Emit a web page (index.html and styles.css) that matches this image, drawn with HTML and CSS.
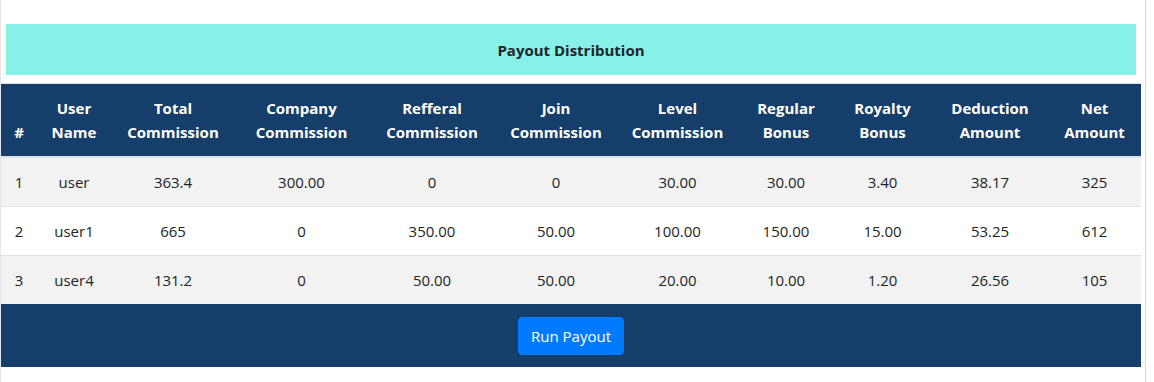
FILE: index.html
```html
<!DOCTYPE html>
<html>
<head>
<meta charset="utf-8">
<link rel="stylesheet" href="styles.css">
</head>
<body>
<div class="page">
  <div class="panel">
    <div class="title-bar">Payout Distribution</div>
    <table class="payout-table">
      <colgroup>
        <col class="c-num">
        <col class="c-user">
        <col class="c-total">
        <col class="c-company">
        <col class="c-ref">
        <col class="c-join">
        <col class="c-level">
        <col class="c-regular">
        <col class="c-royalty">
        <col class="c-deduct">
        <col class="c-net">
      </colgroup>
      <thead>
        <tr>
          <th>#</th>
          <th>User<br>Name</th>
          <th>Total<br>Commission</th>
          <th>Company<br>Commission</th>
          <th>Refferal<br>Commission</th>
          <th>Join<br>Commission</th>
          <th>Level<br>Commission</th>
          <th>Regular<br>Bonus</th>
          <th>Royalty<br>Bonus</th>
          <th>Deduction<br>Amount</th>
          <th>Net<br>Amount</th>
        </tr>
      </thead>
      <tbody>
        <tr>
          <td>1</td><td>user</td><td>363.4</td><td>300.00</td><td>0</td><td>0</td><td>30.00</td><td>30.00</td><td>3.40</td><td>38.17</td><td>325</td>
        </tr>
        <tr>
          <td>2</td><td>user1</td><td>665</td><td>0</td><td>350.00</td><td>50.00</td><td>100.00</td><td>150.00</td><td>15.00</td><td>53.25</td><td>612</td>
        </tr>
        <tr>
          <td>3</td><td>user4</td><td>131.2</td><td>0</td><td>50.00</td><td>50.00</td><td>20.00</td><td>10.00</td><td>1.20</td><td>26.56</td><td>105</td>
        </tr>
      </tbody>
    </table>
    <div class="footer-bar">
      <button class="btn-run" type="button">Run Payout</button>
    </div>
  </div>
</div>
</body>
</html>
```

FILE: styles.css
```css
html, body {
  margin: 0;
  padding: 0;
  background: #ffffff;
}
body {
  font-family: "Open Sans", "Noto Sans", sans-serif;
  font-size: 15px;
  line-height: 24px;
  color: #212529;
}
.page {
  width: 1144px;
  min-height: 100vh;
  border-left: 1px solid #e4e6e9;
  border-right: 1px solid #d6d6d6;
  box-sizing: content-box;
}
.panel {
  width: 1140px;
  padding-top: 24px;
}
.title-bar {
  margin: 0 5px 8px 5px;
  height: 51px;
  background: #87f1e8;
  display: flex;
  align-items: center;
  justify-content: center;
  font-weight: 700;
  font-size: 15px;
  color: #212529;
}
.payout-table {
  width: 1140px;
  border-collapse: collapse;
  table-layout: fixed;
}
.c-num { width: 36px; }
.c-user { width: 74px; }
.c-total { width: 124px; }
.c-company { width: 133px; }
.c-ref { width: 128px; }
.c-join { width: 120px; }
.c-level { width: 123px; }
.c-regular { width: 94px; }
.c-royalty { width: 99px; }
.c-deduct { width: 116px; }
.c-net { width: 93px; }
.payout-table th {
  background: #163e6a;
  color: #ffffff;
  font-weight: 700;
  padding: 12px 0;
  text-align: center;
  vertical-align: bottom;
  border-top: 1px solid #dee2e6;
  border-bottom: 2px solid #dee2e6;
  white-space: nowrap;
}
.payout-table td {
  padding: 12px 0;
  height: 24px;
  text-align: center;
  border-top: 1px solid #dee2e6;
  white-space: nowrap;
}
.payout-table tbody tr:nth-child(odd) td {
  background: #f2f2f2;
}
.payout-table tbody tr:nth-child(even) td {
  background: #ffffff;
}
.footer-bar {
  background: #163e6a;
  border-top: 1px solid #163e6a;
  padding: 12px 0;
  min-height: 38px;
  display: flex;
  justify-content: center;
  align-items: center;
}
.btn-run {
  font-family: inherit;
  font-size: 15px;
  line-height: 24px;
  color: #ffffff;
  background: #007bff;
  border: 1px solid #007bff;
  border-radius: 4px;
  padding: 6px 12px;
  width: 106px;
  height: 38px;
  cursor: pointer;
}
```
